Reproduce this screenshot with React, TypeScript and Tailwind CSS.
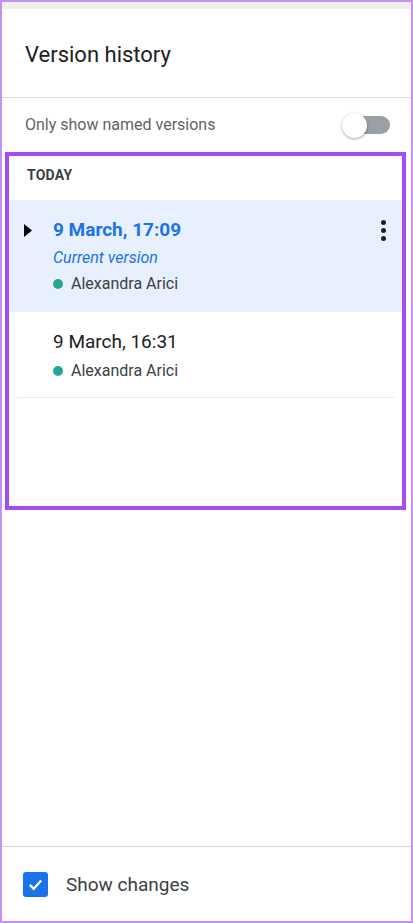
import React from "react";

const font = { fontFamily: "Roboto, 'Noto Sans', Arial, sans-serif" };

function Author({ name }: { name: string }) {
  return (
    <div className="flex items-center gap-[8px] leading-[20px]">
      <span className="w-[10px] h-[10px] rounded-full bg-[#24a694]" />
      <span className="text-[16px] text-[#3c4043]">{name}</span>
    </div>
  );
}

export default function App() {
  return (
    <div
      className="w-[413px] h-[923px] border-2 border-[#c791ef] bg-white flex flex-col overflow-hidden"
      style={font}
    >
      {/* top strip */}
      <div className="h-[7px] bg-[#efefef] shrink-0" />

      {/* Header */}
      <div className="h-[89px] flex items-center px-[23px] pt-[2px] border-b border-[#dadce0] shrink-0">
        <h1 className="text-[22px] text-[#202124] font-normal">Version history</h1>
      </div>

      {/* Named versions toggle */}
      <div className="h-[54px] flex items-center justify-between pl-[23px] pr-[21px] shrink-0">
        <span className="text-[16px] text-[#5f6368]">Only show named versions</span>
        <div className="relative w-[48px] h-[25px] flex items-center">
          <div className="ml-auto w-[40px] h-[18px] rounded-full bg-[#9aa0a6]" />
          <div className="absolute left-0 top-0 w-[25px] h-[25px] rounded-full bg-white shadow-[0_1px_3px_rgba(0,0,0,0.35)]" />
        </div>
      </div>

      {/* Highlighted version list */}
      <div className="ml-[3px] mr-[5px] h-[358px] border-[4px] border-[#a64cf2] flex flex-col shrink-0">
        <div className="h-[44px] flex items-start pl-[18px] pt-[11px]">
          <span className="text-[14px] leading-[16px] font-bold tracking-[0.2px] text-[#3c4043]">TODAY</span>
        </div>

        <div className="h-[112px] bg-[#e8f0fe] flex pl-[15px] pr-[14px] pt-[18px]">
          <div className="w-[29px] pt-[6px]">
            <svg width="8" height="13" viewBox="0 0 8 13">
              <path d="M0 0 L8 6.5 L0 13 Z" fill="#000" />
            </svg>
          </div>
          <div className="flex-1 flex flex-col">
            <span className="text-[19px] font-bold text-[#1a73e8] leading-[24px]">9 March, 17:09</span>
            <span className="text-[16px] italic text-[#1a73e8] leading-[20px] mt-[6px]">Current version</span>
            <div className="mt-[6px]">
              <Author name="Alexandra Arici" />
            </div>
          </div>
          <div className="flex flex-col items-center gap-[3px] pt-[2px] w-[10px]">
            <span className="w-[5px] h-[5px] rounded-full bg-[#202124]" />
            <span className="w-[5px] h-[5px] rounded-full bg-[#202124]" />
            <span className="w-[5px] h-[5px] rounded-full bg-[#202124]" />
          </div>
        </div>

        <div className="mx-[8px] h-[86px] border-b border-[#e8eaed] flex flex-col pl-[36px] pt-[18px]">
          <span className="text-[19px] text-[#202124] leading-[24px]">9 March, 16:31</span>
          <div className="mt-[7px]">
            <Author name="Alexandra Arici" />
          </div>
        </div>
      </div>

      <div className="flex-1" />

      {/* Footer */}
      <div className="h-[75px] border-t border-[#d6d6d6] flex items-center pl-[21px] gap-[18px] shrink-0">
        <div className="w-[25px] h-[25px] rounded-[3px] bg-[#1a73e8] flex items-center justify-center">
          <svg width="17" height="17" viewBox="0 0 24 24">
            <path d="M4 12.5 L9.5 18 L20 6.5" fill="none" stroke="#fff" strokeWidth="3.2" />
          </svg>
        </div>
        <span className="text-[19px] text-[#3c4043] pt-[2px]">Show changes</span>
      </div>
    </div>
  );
}
